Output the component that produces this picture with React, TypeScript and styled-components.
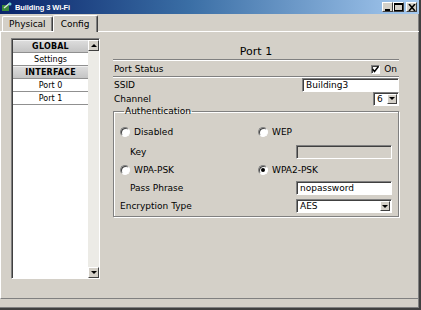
import * as React from 'react';
import styled, { createGlobalStyle } from 'styled-components';

const GlobalStyle = createGlobalStyle`
  html, body {
    margin: 0;
    padding: 0;
    background: #d4d0c8;
  }
  body {
    font-family: "DejaVu Sans", Verdana, sans-serif;
    font-size: 9px;
    color: #000;
  }
`

const App: React.FC = () => {
  return (
    <Window>
      <GlobalStyle />
      <TitleBar>
        <TitleIcon viewBox="0 0 10 10">
          <rect x="0" y="3" width="7" height="6" fill="#3a8a3a" />
          <path d="M2 6 L8 1" stroke="#e0e0e0" strokeWidth="1.4" />
          <circle cx="8" cy="2" r="1.5" fill="#6cc" />
        </TitleIcon>
        <TitleText>Building 3 Wi-Fi</TitleText>
        <Controls>
          <CtrlButton>
            <svg width="8" height="7" viewBox="0 0 8 7"><rect x="1" y="5" width="5" height="2" fill="#000" /></svg>
          </CtrlButton>
          <CtrlButton>
            <svg width="9" height="8" viewBox="0 0 9 8"><rect x="0.5" y="0.5" width="8" height="7" fill="none" stroke="#000" /><rect x="0" y="0" width="9" height="2" fill="#000" /></svg>
          </CtrlButton>
          <CtrlButton $gap>
            <svg width="8" height="7" viewBox="0 0 8 7"><path d="M1 0 L7 7 M7 0 L1 7" stroke="#000" strokeWidth="1.6" /></svg>
          </CtrlButton>
        </Controls>
      </TitleBar>
      <TabStrip>
        <Tab>Physical</Tab>
        <Tab $active>Config</Tab>
      </TabStrip>
      <Panel>
        <Sidebar>
          <List>
            <GroupHead>GLOBAL</GroupHead>
            <Item>Settings</Item>
            <GroupHead>INTERFACE</GroupHead>
            <Item>Port 0</Item>
            <Item>Port 1</Item>
          </List>
          <ScrollBar>
            <ScrollBtn><Arrow $down={false} /></ScrollBtn>
            <ScrollTrack />
            <ScrollBtn><Arrow $down /></ScrollBtn>
          </ScrollBar>
        </Sidebar>
        <Main>
          <Heading>Port 1</Heading>
          <Row $line>
            <span>Port Status</span>
            <CheckWrap>
              <Check>
                <svg width="7" height="7" viewBox="0 0 7 7"><path d="M0.5 3 L2.5 5.5 L6.5 0.5" stroke="#000" strokeWidth="1.5" fill="none" /></svg>
              </Check>
              On
            </CheckWrap>
          </Row>
          <Row>
            <span>SSID</span>
            <TextBox $w={97}>Building3</TextBox>
          </Row>
          <Row>
            <span>Channel</span>
            <Select $w={26}>
              <span>6</span>
              <DropBtn><Arrow $down /></DropBtn>
            </Select>
          </Row>
          <Group>
            <Legend>Authentication</Legend>
            <AuthGrid>
              <Radio><RadioDot /> Disabled</Radio>
              <Radio $span><RadioDot /> WEP</Radio>
              <Label>Key</Label>
              <Spacer />
              <TextBox $w={96} $disabled />
              <Radio><RadioDot /> WPA-PSK</Radio>
              <Radio $span><RadioDot $on /> WPA2-PSK</Radio>
              <Label>Pass Phrase</Label>
              <Spacer />
              <TextBox $w={96}>nopassword</TextBox>
              <Label $flush>Encryption Type</Label>
              <Spacer />
              <Select $w={96}>
                <span>AES</span>
                <DropBtn><Arrow $down /></DropBtn>
              </Select>
            </AuthGrid>
          </Group>
        </Main>
      </Panel>
    </Window>
  )
}

const Window = styled.div`
  width: 421px;
  height: 310px;
  box-sizing: border-box;
  display: flex;
  flex-direction: column;
  background: #d4d0c8;
  border-right: 2px solid #404040;
  border-bottom: 2px solid #404040;
  box-shadow: inset -1px -1px 0 #808080;
  overflow: hidden;
`
const TitleBar = styled.div`
  height: 14px;
  flex: none;
  display: flex;
  align-items: center;
  padding: 0 2px;
  background: linear-gradient(to right, #0a246a 0%, #3a6ea5 45%, #a6caf0 100%);
`
const TitleIcon = styled.svg`
  width: 10px;
  height: 10px;
  margin-right: 3px;
`
const TitleText = styled.div`
  flex: 1;
  color: #fff;
  font-family: "Liberation Sans", Arial, sans-serif;
  font-weight: bold;
  font-size: 7.5px;
  letter-spacing: -0.1px;
`
const Controls = styled.div`
  display: flex;
  align-items: center;
`
const CtrlButton = styled.div<{ $gap?: boolean }>`
  width: 11px;
  height: 10px;
  margin-left: ${p => (p.$gap ? '2px' : '0')};
  background: #d4d0c8;
  box-sizing: border-box;
  border: 1px solid;
  border-color: #fff #404040 #404040 #fff;
  display: flex;
  align-items: center;
  justify-content: center;
`
const TabStrip = styled.div`
  height: 17px;
  flex: none;
  display: flex;
  align-items: flex-end;
  padding-left: 2px;
`
const Tab = styled.div<{ $active?: boolean }>`
  height: ${p => (p.$active ? '17px' : '15px')};
  box-sizing: border-box;
  padding: 0 ${p => (p.$active ? '7px' : '6px')};
  display: flex;
  align-items: center;
  font-size: 9px;
  border-top: 1px solid #fff;
  border-left: 1px solid #fff;
  border-right: 1px solid #404040;
  box-shadow: inset -1px 0 0 #808080;
  border-radius: 2px 2px 0 0;
  margin-bottom: ${p => (p.$active ? '-1px' : '0')};
  background: #d4d0c8;
  position: relative;
  z-index: ${p => (p.$active ? 1 : 0)};
`
const Panel = styled.div`
  flex: 1;
  display: flex;
  align-items: flex-start;
  border-top: 1px solid #fff;
  border-left: 1px solid #fff;
  margin: 0 0 9px 0;
  border-bottom: 1px solid #808080;
  padding: 6px 0 0 10px;
`
const Sidebar = styled.div`
  width: 89px;
  height: 241px;
  box-sizing: border-box;
  display: flex;
  border: 1px solid;
  border-color: #808080 #fff #fff #808080;
  box-shadow: inset 1px 1px 0 #404040;
  background: #fff;
  padding: 1px 0 0 1px;
`
const List = styled.div`
  flex: 1;
  display: flex;
  flex-direction: column;
`
const GroupHead = styled.div`
  height: 13px;
  box-sizing: border-box;
  display: flex;
  align-items: center;
  justify-content: center;
  background: linear-gradient(#dcdcdc, #c4c4c4);
  border-top: 1px solid #f0f0f0;
  border-bottom: 1px solid #909090;
  font-weight: bold;
  font-size: 8px;
  letter-spacing: 0.2px;
`
const Item = styled.div`
  height: 13px;
  box-sizing: border-box;
  display: flex;
  align-items: center;
  justify-content: center;
  background: #fff;
  border-bottom: 1px solid #909090;
  font-size: 8px;
`
const ScrollBar = styled.div`
  width: 11px;
  display: flex;
  flex-direction: column;
  background: #ecebe6;
`
const ScrollBtn = styled.div`
  height: 11px;
  box-sizing: border-box;
  background: #d4d0c8;
  border: 1px solid;
  border-color: #fff #404040 #404040 #fff;
  display: flex;
  align-items: center;
  justify-content: center;
`
const ScrollTrack = styled.div`
  flex: 1;
`
const Arrow = styled.div<{ $down: boolean }>`
  width: 0;
  height: 0;
  border-left: 3px solid transparent;
  border-right: 3px solid transparent;
  ${p => (p.$down ? 'border-top: 3px solid #000;' : 'border-bottom: 3px solid #000;')}
`
const Main = styled.div`
  width: 286px;
  margin-left: 13px;
  display: flex;
  flex-direction: column;
  padding-top: 4px;
`
const Heading = styled.div`
  height: 16px;
  display: flex;
  align-items: flex-end;
  justify-content: center;
  font-size: 11px;
  padding-bottom: 1px;
  border-bottom: 1px solid #808080;
  box-shadow: 0 1px 0 #fff;
`
const Row = styled.div<{ $line?: boolean }>`
  height: ${p => (p.$line ? '14px' : '13px')};
  margin-top: ${p => (p.$line ? '2px' : '1px')};
  display: flex;
  align-items: center;
  justify-content: space-between;
  padding-left: 1px;
  ${p => (p.$line ? 'border-bottom: 1px solid #808080; box-shadow: 0 1px 0 #fff;' : '')}
`
const CheckWrap = styled.div`
  display: flex;
  align-items: center;
  gap: 4px;
  padding-right: 2px;
`
const Check = styled.div`
  width: 9px;
  height: 9px;
  box-sizing: border-box;
  background: #fff;
  border: 1px solid;
  border-color: #808080 #fff #fff #808080;
  box-shadow: inset 1px 1px 0 #404040;
  display: flex;
  align-items: center;
  justify-content: center;
`
const TextBox = styled.div<{ $w: number; $disabled?: boolean }>`
  width: ${p => p.$w}px;
  height: 14px;
  box-sizing: border-box;
  background: ${p => (p.$disabled ? '#d4d0c8' : '#fff')};
  border: 1px solid;
  border-color: #808080 #fff #fff #808080;
  box-shadow: inset 1px 1px 0 #404040;
  display: flex;
  align-items: center;
  padding-left: 3px;
  font-size: 9px;
`
const Select = styled.div<{ $w: number }>`
  width: ${p => p.$w}px;
  height: 14px;
  box-sizing: border-box;
  background: #fff;
  border: 1px solid;
  border-color: #808080 #fff #fff #808080;
  box-shadow: inset 1px 1px 0 #404040;
  display: flex;
  align-items: center;
  justify-content: space-between;
  padding: 1px 1px 1px 3px;
  font-size: 9px;
`
const DropBtn = styled.div`
  width: 10px;
  height: 10px;
  box-sizing: border-box;
  background: #d4d0c8;
  border: 1px solid;
  border-color: #fff #404040 #404040 #fff;
  display: flex;
  align-items: center;
  justify-content: center;
`
const Group = styled.fieldset`
  margin: 1px 0 0 0;
  padding: 0 6px 1px 6px;
  border: 1px solid #808080;
  box-shadow: 1px 1px 0 #fff, inset 1px 1px 0 #fff;
  min-width: 0;
`
const Legend = styled.legend`
  padding: 0 1px;
  margin-left: 4px;
  font-size: 9px;
`
const AuthGrid = styled.div`
  display: grid;
  grid-template-columns: 138px 38px 96px;
  grid-template-rows: 20px 19px 18px 18px 18px;
  align-items: center;
  padding-top: 6px;
`
const Radio = styled.div<{ $span?: boolean }>`
  display: flex;
  align-items: center;
  gap: 4px;
  ${p => (p.$span ? 'grid-column: 2 / span 2;' : '')}
`
const RadioDot = styled.span<{ $on?: boolean }>`
  width: 10px;
  height: 10px;
  box-sizing: border-box;
  border-radius: 50%;
  background: #fff;
  border: 1px solid;
  border-color: #808080 #fff #fff #808080;
  box-shadow: inset 1px 1px 0 #404040;
  display: inline-flex;
  align-items: center;
  justify-content: center;
  &::after {
    content: '';
    width: 4px;
    height: 4px;
    border-radius: 50%;
    background: ${p => (p.$on ? '#000' : 'transparent')};
  }
`
const Label = styled.div<{ $flush?: boolean }>`
  padding-left: ${p => (p.$flush ? '0' : '10px')};
`
const Spacer = styled.div``

export default App;
